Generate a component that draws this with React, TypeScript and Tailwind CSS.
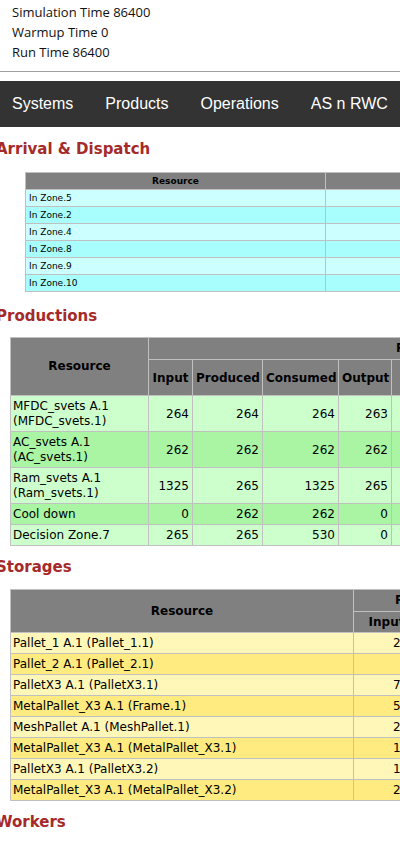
import React from 'react';

const arrivalRows = ['In Zone.5', 'In Zone.2', 'In Zone.4', 'In Zone.8', 'In Zone.9', 'In Zone.10'];

const productionRows = [
  { name: 'MFDC_svets A.1 (MFDC_svets.1)', input: 264, produced: 264, consumed: 264, output: 263 },
  { name: 'AC_svets A.1 (AC_svets.1)', input: 262, produced: 262, consumed: 262, output: 262 },
  { name: 'Ram_svets A.1 (Ram_svets.1)', input: 1325, produced: 265, consumed: 1325, output: 265 },
  { name: 'Cool down', input: 0, produced: 262, consumed: 262, output: 0 },
  { name: 'Decision Zone.7', input: 265, produced: 265, consumed: 530, output: 0 },
];

const storageRows = [
  { name: 'Pallet_1 A.1 (Pallet_1.1)', input: 264 },
  { name: 'Pallet_2 A.1 (Pallet_2.1)', input: 0 },
  { name: 'PalletX3 A.1 (PalletX3.1)', input: 795 },
  { name: 'MetalPallet_X3 A.1 (Frame.1)', input: 530 },
  { name: 'MeshPallet A.1 (MeshPallet.1)', input: 262 },
  { name: 'MetalPallet_X3 A.1 (MetalPallet_X3.1)', input: 132 },
  { name: 'PalletX3 A.1 (PalletX3.2)', input: 133 },
  { name: 'MetalPallet_X3 A.1 (MetalPallet_X3.2)', input: 265 },
];

const navLinks = ['Systems', 'Products', 'Operations', 'AS n RWC', 'Reports'];

function Heading({ children, className = '' }: { children: React.ReactNode; className?: string }) {
  return (
    <h2
      className={`ml-[-4px] whitespace-nowrap font-['DejaVu_Sans',sans-serif] text-[15px] font-bold leading-[18px] text-[#a52a2a] ${className}`}
    >
      {children}
    </h2>
  );
}

const th = 'border border-[#c0c0c0] bg-[#808080] font-bold text-black';
const td = 'border border-[#c0c0c0] text-black';

export default function App() {
  return (
    <div className="w-[400px] overflow-hidden bg-white pb-[20px] text-black">
      <div className="px-[12px] pt-[2px] font-['Open_Sans',sans-serif] text-[13px] leading-[20px] text-[#111]">
        <div>Simulation Time 86400</div>
        <div>Warmup Time 0</div>
        <div>Run Time 86400</div>
      </div>
      <div className="mt-[9px] h-px bg-[#a0a0a0]" />

      <nav className="mt-[9px] flex h-[46px] items-center gap-[32px] whitespace-nowrap bg-[#333333] pl-[12px] font-['Liberation_Sans',Arial,sans-serif] text-[16px] text-white">
        {navLinks.map((l) => (
          <span key={l}>{l}</span>
        ))}
      </nav>

      <Heading className="mt-[13px]">Arrival &amp; Dispatch</Heading>
      <table className="mt-[14px] ml-[25px] w-[600px] table-fixed border-collapse font-['DejaVu_Sans',sans-serif] text-[9px] leading-[16px]">
        <colgroup>
          <col className="w-[300px]" />
          <col className="w-[300px]" />
        </colgroup>
        <thead>
          <tr>
            <th className={`${th} px-[3px] py-0 text-center`}>Resource</th>
            <th className={`${th} px-[3px] py-0 text-center`}>Arrivals</th>
          </tr>
        </thead>
        <tbody>
          {arrivalRows.map((r, i) => (
            <tr key={r} className={i % 2 === 0 ? 'bg-[#ccffff]' : 'bg-[#a8fdfd]'}>
              <td className={`${td} px-[3px] py-0 text-left`}>{r}</td>
              <td className={`${td} px-[3px] py-0`}></td>
            </tr>
          ))}
        </tbody>
      </table>

      <Heading className="mt-[15px]">Productions</Heading>
      <table className="mt-[12px] ml-[10px] w-[620px] table-fixed border-collapse font-['DejaVu_Sans',sans-serif] text-[12px] leading-[15px]">
        <colgroup>
          <col className="w-[138px]" />
          <col className="w-[44px]" />
          <col className="w-[70px]" />
          <col className="w-[76px]" />
          <col className="w-[53px]" />
          <col className="w-[119px]" />
          <col className="w-[120px]" />
        </colgroup>
        <thead>
          <tr>
            <th rowSpan={2} className={`${th} px-[2px] text-center`}>
              Resource
            </th>
            <th colSpan={6} className={`${th} py-[3px] pl-[247px] text-left whitespace-nowrap`}>
              Parts
            </th>
          </tr>
          <tr>
            <th className={`${th} px-[3px] pt-[3px] pb-[2px] text-center`}>Input</th>
            <th className={`${th} px-[3px] pt-[3px] pb-[2px] text-center`}>Produced</th>
            <th className={`${th} px-[3px] pt-[3px] pb-[2px] text-center`}>Consumed</th>
            <th className={`${th} px-[3px] pt-[3px] pb-[2px] text-center`}>Output</th>
            <th className={`${th} px-[3px] pt-[3px] pb-[2px] text-center`}>
              Avg
              <br />
              WIP
            </th>
            <th className={`${th} px-[3px] pt-[3px] pb-[2px] text-center`}>Rejected</th>
          </tr>
        </thead>
        <tbody>
          {productionRows.map((r, i) => (
            <tr key={r.name} className={i % 2 === 0 ? 'bg-[#ccffcc]' : 'bg-[#a9f5a3]'}>
              <td className={`${td} pl-[2px] pr-[3px] pt-[3px] pb-[2px] text-left`}>{r.name}</td>
              <td className={`${td} px-[3px] pt-[3px] pb-[2px] text-right`}>{r.input}</td>
              <td className={`${td} px-[3px] pt-[3px] pb-[2px] text-right`}>{r.produced}</td>
              <td className={`${td} px-[3px] pt-[3px] pb-[2px] text-right`}>{r.consumed}</td>
              <td className={`${td} px-[3px] pt-[3px] pb-[2px] text-right`}>{r.output}</td>
              <td className={`${td} px-[3px] pt-[3px] pb-[2px] text-right`}>0</td>
              <td className={`${td} px-[3px] pt-[3px] pb-[2px] text-right`}>0</td>
            </tr>
          ))}
        </tbody>
      </table>

      <Heading className="mt-[12px]">Storages</Heading>
      <table className="mt-[13px] ml-[10px] w-[620px] table-fixed border-collapse font-['DejaVu_Sans',sans-serif] text-[12px] leading-[15px]">
        <colgroup>
          <col className="w-[343px]" />
          <col className="w-[66px]" />
          <col className="w-[66px]" />
          <col className="w-[145px]" />
        </colgroup>
        <thead>
          <tr>
            <th rowSpan={2} className={`${th} px-[2px] text-center`}>
              Resource
            </th>
            <th colSpan={3} className={`${th} py-[3px] pl-[41px] text-left whitespace-nowrap`}>
              Parts
            </th>
          </tr>
          <tr>
            <th className={`${th} px-[3px] pt-[3px] pb-[2px] text-center`}>Input</th>
            <th className={`${th} px-[3px] pt-[3px] pb-[2px] text-center`}>Output</th>
            <th className={`${th} px-[3px] pt-[3px] pb-[2px] text-center`}>Avg Content</th>
          </tr>
        </thead>
        <tbody>
          {storageRows.map((r, i) => (
            <tr key={r.name} className={i % 2 === 0 ? 'bg-[#fff7b8]' : 'bg-[#ffeb80]'}>
              <td className={`${td} pl-[2px] pr-[3px] pt-[3px] pb-[2px] text-left whitespace-nowrap`}>{r.name}</td>
              <td className={`${td} px-[3px] pt-[3px] pb-[2px] text-right`}>{r.input}</td>
              <td className={`${td} px-[3px] pt-[3px] pb-[2px] text-right`}>{r.input}</td>
              <td className={`${td} px-[3px] pt-[3px] pb-[2px] text-right`}>0</td>
            </tr>
          ))}
        </tbody>
      </table>

      <Heading className="mt-[12px]">Workers</Heading>
    </div>
  );
}
